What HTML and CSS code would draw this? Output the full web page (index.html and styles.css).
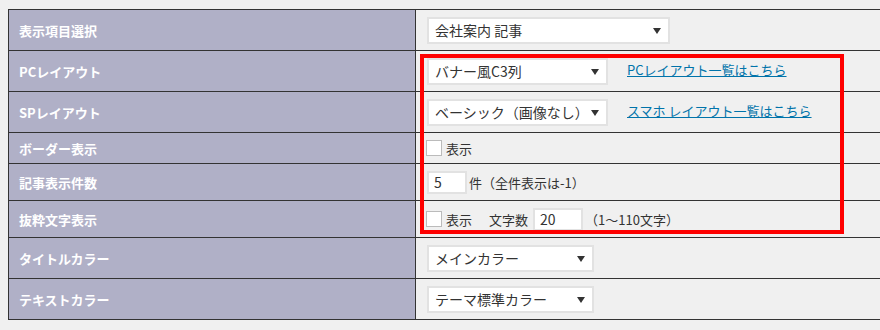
FILE: index.html
```html
<!DOCTYPE html>
<html lang="ja">
<head>
    <meta charset="UTF-8">
    <title>表示設定</title>
    <link rel="stylesheet" href="styles.css">
</head>
<body>
    <div class="settings">
        <div class="row">
            <div class="label">表示項目選択</div>
            <div class="field">
                <div class="select wide">
                    <select><option>会社案内 記事</option></select>
                </div>
            </div>
        </div>
        <div class="row">
            <div class="label">PCレイアウト</div>
            <div class="field">
                <div class="select mid">
                    <select><option>バナー風C3列</option></select>
                </div>
                <a href="#" class="list-link">PCレイアウト一覧はこちら</a>
            </div>
        </div>
        <div class="row">
            <div class="label">SPレイアウト</div>
            <div class="field">
                <div class="select mid">
                    <select><option>ベーシック（画像なし）</option></select>
                </div>
                <a href="#" class="list-link">スマホ レイアウト一覧はこちら</a>
            </div>
        </div>
        <div class="row short">
            <div class="label">ボーダー表示</div>
            <div class="field">
                <label class="check"><span class="box"></span>表示</label>
            </div>
        </div>
        <div class="row medium">
            <div class="label">記事表示件数</div>
            <div class="field">
                <input type="text" class="num" value="5">
                <span class="note">件（全件表示は-1）</span>
            </div>
        </div>
        <div class="row medium">
            <div class="label">抜粋文字表示</div>
            <div class="field">
                <label class="check"><span class="box"></span>表示</label>
                <span class="caption">文字数</span>
                <input type="text" class="num chars" value="20">
                <span class="note">（1〜110文字）</span>
            </div>
        </div>
        <div class="row">
            <div class="label">タイトルカラー</div>
            <div class="field">
                <div class="select narrow">
                    <select><option>メインカラー</option></select>
                </div>
            </div>
        </div>
        <div class="row">
            <div class="label">テキストカラー</div>
            <div class="field">
                <div class="select narrow">
                    <select><option>テーマ標準カラー</option></select>
                </div>
            </div>
        </div>
        <div class="highlight"></div>
    </div>
</body>
</html>
```

FILE: styles.css
```css
html {
    overflow: hidden;
}
body {
    margin: 0;
    padding: 9px 0 0 8px;
    background-color: #f0f0f0;
    font-family: "Noto Sans CJK JP", "Liberation Sans", sans-serif;
    color: #333;
}
.settings {
    position: relative;
    width: 900px;
    border-top: 1px solid #333;
    border-left: 1px solid #333;
}
.row {
    display: flex;
    height: 40px;
    border-bottom: 1px solid #333;
}
.row.short {
    height: 30px;
}
.row.medium {
    height: 36px;
}
.label {
    width: 396px;
    flex-shrink: 0;
    display: flex;
    align-items: center;
    padding-left: 10px;
    background-color: #b0b0c7;
    border-right: 1px solid #333;
    color: #fff;
    font-size: 13px;
    font-weight: bold;
}
.field {
    display: flex;
    align-items: center;
    padding-left: 11px;
    font-size: 13px;
}
.select {
    position: relative;
    height: 27px;
}
.select.wide {
    width: 243px;
}
.select.mid {
    width: 181px;
}
.select.narrow {
    width: 167px;
}
.select select {
    appearance: none;
    -webkit-appearance: none;
    width: 100%;
    height: 100%;
    margin: 0;
    padding: 0 0 0 6px;
    background-color: #fff;
    border: 2px solid #e2e2e2;
    border-radius: 0;
    font-family: "Noto Sans CJK JP", "Liberation Sans", sans-serif;
    font-size: 14px;
    color: #333;
    outline: none;
}
.select::after {
    content: "";
    position: absolute;
    right: 9px;
    top: 11px;
    border-left: 4px solid transparent;
    border-right: 4px solid transparent;
    border-top: 6px solid #333;
    pointer-events: none;
}
.list-link {
    margin-left: 19px;
    margin-top: -3px;
    color: #0073aa;
    font-size: 13px;
    text-decoration: underline;
}
.check {
    display: flex;
    align-items: center;
    gap: 4px;
    margin-left: -1px;
}
.box {
    width: 14px;
    height: 14px;
    background-color: #fff;
    border: 1px solid #bbb;
}
.num {
    width: 31px;
    height: 19px;
    margin: 0;
    padding: 0 0 0 5px;
    box-sizing: content-box;
    background-color: #fff;
    border: 2px solid #e2e2e2;
    font-family: "Noto Sans CJK JP", "Liberation Sans", sans-serif;
    font-size: 14px;
    color: #333;
    outline: none;
}
.num.chars {
    width: 41px;
    margin-left: 5px;
}
.note {
    margin-left: 2px;
}
.caption {
    margin-left: 17px;
}
.highlight {
    position: absolute;
    left: 411px;
    top: 44px;
    width: 416px;
    height: 172px;
    border: 4px solid #ff0000;
    pointer-events: none;
}
```
